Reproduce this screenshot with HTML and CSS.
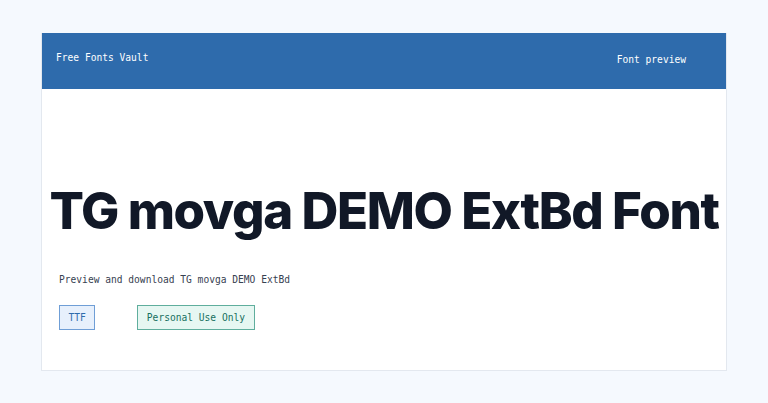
FILE: index.html
```html
<!DOCTYPE html>
<html lang="en">
<head>
    <meta charset="UTF-8">
    <title>TG movga DEMO ExtBd Font - Free Fonts Vault</title>
    <meta name="viewport" content="width=device-width, initial-scale=1.0">
    <link rel="stylesheet" href="styles.css">
</head>
<body>
<div class="page">
    <header class="topbar">
        <span class="brand">Free Fonts Vault</span>
        <span class="nav">Font preview</span>
    </header>

    <main class="content">
        <div class="hero">
            <h1 class="font-title">TG movga DEMO ExtBd Font</h1>
        </div>
        <p class="desc">Preview and download TG movga DEMO ExtBd</p>
        <div class="tags">
            <span class="tag tag-format">TTF</span>
            <span class="tag tag-license">Personal Use Only</span>
        </div>
    </main>
</div>
</body>
</html>
```

FILE: styles.css
```css
* {
    box-sizing: border-box;
}

body {
    background-color: #f5f9fe;
    font-family: "DejaVu Sans Mono", monospace;
    font-size: 9.6px;
    margin: 0;
    padding: 33px 41px;
}

.page {
    background-color: #fff;
    border: 1px solid #e3e8ef;
    border-top: none;
}

.topbar {
    height: 56px;
    background-color: #2e6bac;
    color: #fff;
    display: flex;
    align-items: center;
    justify-content: space-between;
    padding: 0 40px 4px 14px;
}

.brand {
    margin-top: -3px;
}

.content {
    padding: 0 17px 40px;
}

/* the title is wider than the card, keep it centred */
.hero {
    display: flex;
    justify-content: center;
    padding-top: 96px;
}

.font-title {
    font-family: Inter, sans-serif;
    font-weight: 800;
    font-size: 51px;
    letter-spacing: -1.4px;
    line-height: 1;
    color: #111827;
    margin: 0;
    white-space: nowrap;
}

.desc {
    color: #374151;
    margin: 38px 0 20px;
}

.tags {
    display: flex;
    gap: 42px;
}

.tag {
    padding: 6px 8.5px;
    border: 1px solid;
}

.tag-format {
    background-color: #e7f0fc;
    border-color: #6f9ed6;
    color: #2e6bac;
}

.tag-license {
    background-color: #e6f7f2;
    border-color: #5fae9d;
    color: #17705f;
}
```
